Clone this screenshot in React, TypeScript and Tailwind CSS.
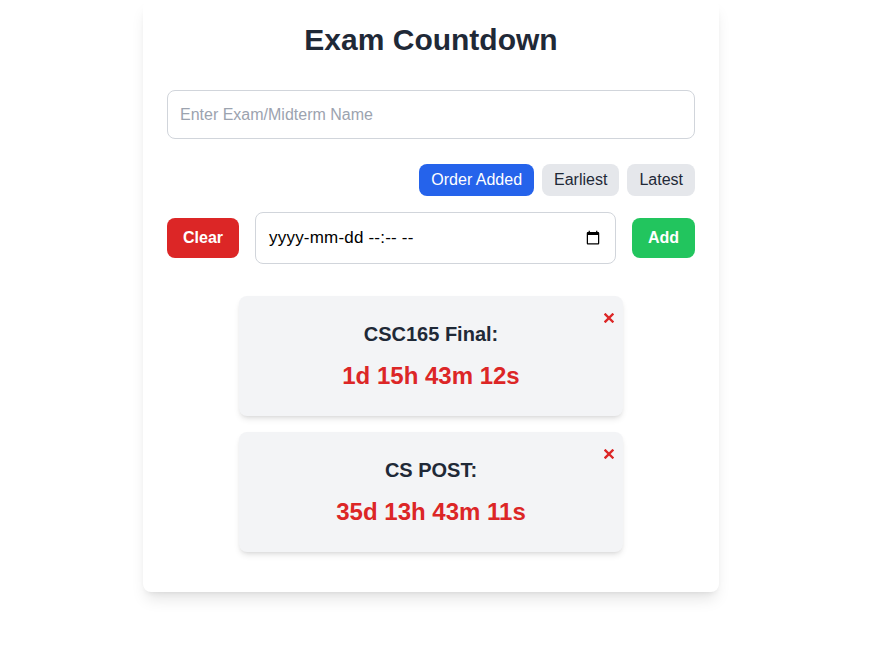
import { useState } from "react";

type Exam = {
  id: number;
  name: string;
  left: string;
};

const exams: Exam[] = [
  { id: 1, name: "CSC165 Final", left: "1d 15h 43m 12s" },
  { id: 2, name: "CS POST", left: "35d 13h 43m 11s" },
];

function ExamCard({ exam }: { exam: Exam }) {
  return (
    <div className="relative w-96 rounded-lg bg-[#f3f4f6] p-6 text-center shadow-md">
      <button className="absolute right-[9px] top-[17px] text-[#dc2626]" aria-label="remove">
        <svg width="10" height="10" viewBox="0 0 10 10">
          <path d="M1.5 1.5 L8.5 8.5 M8.5 1.5 L1.5 8.5" stroke="currentColor" strokeWidth="2.4" strokeLinecap="square" />
        </svg>
      </button>
      <h2 className="mb-3 text-xl font-bold text-[#1f2937]">{exam.name}:</h2>
      <p className="text-2xl font-bold text-[#dc2626]">{exam.left}</p>
    </div>
  );
}

export default function App() {
  const [order, setOrder] = useState("added");
  const [date, setDate] = useState("");
  const sorts = [
    { key: "added", label: "Order Added" },
    { key: "earliest", label: "Earliest" },
    { key: "latest", label: "Latest" },
  ];

  return (
    <div className="min-h-[663px] bg-white font-['Liberation_Sans',Arial,sans-serif]">
      <div className="ml-[143px] w-[576px] rounded-lg bg-white px-6 pt-[22px] pb-10 shadow-lg">
        <h1 className="mb-8 text-center text-3xl font-bold text-[#1f2937]">Exam Countdown</h1>

        <input
          type="text"
          placeholder="Enter Exam/Midterm Name"
          className="h-[49px] w-full rounded-lg border border-[#d1d5db] px-3 text-base text-[#1f2937] placeholder:text-[#9ca3af] outline-none"
        />

        <div className="mt-[25px] mb-4 flex justify-end gap-2">
          {sorts.map((s) => (
            <button
              key={s.key}
              onClick={() => setOrder(s.key)}
              className={
                order === s.key
                  ? "h-8 rounded-lg bg-[#2563eb] px-3 text-base text-white"
                  : "h-8 rounded-lg bg-[#e5e7eb] px-3 text-base text-[#1f2937]"
              }
            >
              {s.label}
            </button>
          ))}
        </div>

        <div className="flex items-center gap-4">
          <button className="h-10 rounded-lg bg-[#dc2626] px-4 text-base font-bold text-white">Clear</button>
          <div className="relative flex-1">
            <input
              type="datetime-local"
              value={date}
              onChange={(e) => setDate(e.target.value)}
              className={
                date
                  ? "h-[52px] w-full rounded-lg border border-[#d1d5db] px-3 text-base text-black outline-none"
                  : "h-[52px] w-full rounded-lg border border-[#d1d5db] px-3 text-base text-black outline-none [&::-webkit-datetime-edit]:opacity-0"
              }
            />
            {!date && (
              <span className="pointer-events-none absolute left-[14px] top-1/2 -translate-y-1/2 text-[17px] tracking-[0.2px] text-black">
                yyyy-mm-dd --:-- --
              </span>
            )}
          </div>
          <button className="h-10 rounded-lg bg-[#22c55e] px-4 text-base font-bold text-white">Add</button>
        </div>

        <div className="mt-8 flex flex-col items-center gap-4">
          {exams.map((e) => (
            <ExamCard key={e.id} exam={e} />
          ))}
        </div>
      </div>
    </div>
  );
}
